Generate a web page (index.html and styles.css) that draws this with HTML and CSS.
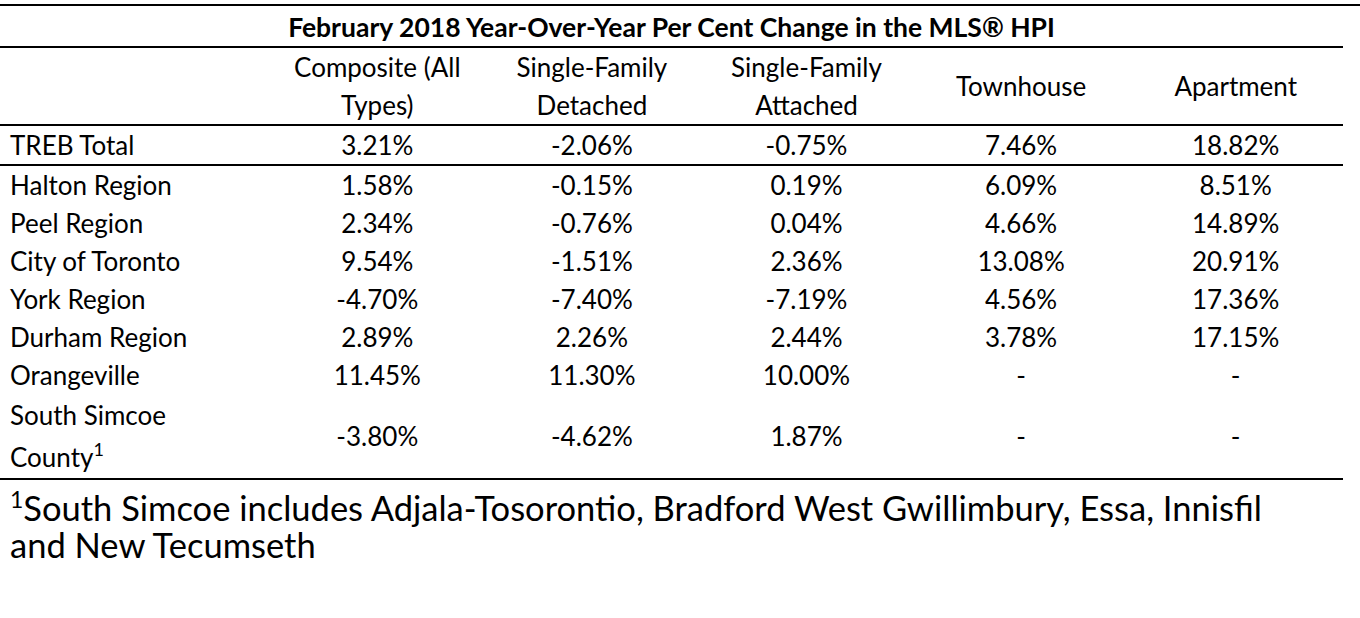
FILE: index.html
```html
<!DOCTYPE html>
<html lang="en">
<head>
<meta charset="utf-8">
<title>February 2018 MLS HPI</title>
<link rel="stylesheet" href="styles.css">
</head>
<body>
<div class="page">
  <div class="rule-top"></div>
  <table class="hpi">
    <colgroup>
      <col class="col-label">
      <col class="col-value">
      <col class="col-value">
      <col class="col-value">
      <col class="col-value">
      <col class="col-value">
    </colgroup>
    <thead>
      <tr class="title-row">
        <th colspan="6">February 2018 Year-Over-Year Per Cent Change in the MLS® HPI</th>
      </tr>
      <tr class="head-row">
        <th class="label"></th>
        <th>Composite (All<br>Types)</th>
        <th>Single-Family<br>Detached</th>
        <th>Single-Family<br>Attached</th>
        <th>Townhouse</th>
        <th>Apartment</th>
      </tr>
    </thead>
    <tbody>
      <tr class="total-row">
        <td class="label">TREB Total</td><td>3.21%</td><td>-2.06%</td><td>-0.75%</td><td>7.46%</td><td>18.82%</td>
      </tr>
      <tr>
        <td class="label">Halton Region</td><td>1.58%</td><td>-0.15%</td><td>0.19%</td><td>6.09%</td><td>8.51%</td>
      </tr>
      <tr>
        <td class="label">Peel Region</td><td>2.34%</td><td>-0.76%</td><td>0.04%</td><td>4.66%</td><td>14.89%</td>
      </tr>
      <tr>
        <td class="label">City of Toronto</td><td>9.54%</td><td>-1.51%</td><td>2.36%</td><td>13.08%</td><td>20.91%</td>
      </tr>
      <tr>
        <td class="label">York Region</td><td>-4.70%</td><td>-7.40%</td><td>-7.19%</td><td>4.56%</td><td>17.36%</td>
      </tr>
      <tr>
        <td class="label">Durham Region</td><td>2.89%</td><td>2.26%</td><td>2.44%</td><td>3.78%</td><td>17.15%</td>
      </tr>
      <tr>
        <td class="label">Orangeville</td><td>11.45%</td><td>11.30%</td><td>10.00%</td><td>-</td><td>-</td>
      </tr>
      <tr class="last-row">
        <td class="label">South Simcoe<br>County<sup>1</sup></td><td>-3.80%</td><td>-4.62%</td><td>1.87%</td><td>-</td><td>-</td>
      </tr>
    </tbody>
  </table>
  <p class="footnote"><sup>1</sup>South Simcoe includes Adjala-Tosorontio, Bradford West Gwillimbury, Essa, Innisfil<br>and New Tecumseth</p>
</div>
</body>
</html>
```

FILE: styles.css
```css
html, body {
  margin: 0;
  padding: 0;
  background: #ffffff;
}

body {
  font-family: "Lato", "Liberation Sans", sans-serif;
  color: #000000;
}

.page {
  width: 1360px;
  padding-top: 4px;
}

.rule-top {
  border-top: 2px solid #000;
}

.hpi {
  width: 1343px;
  border-collapse: separate;
  border-spacing: 0;
  table-layout: fixed;
  font-size: 26px;
  line-height: 38px;
}

.col-label {
  width: 270px;
}

.hpi th,
.hpi td {
  padding: 0;
  text-align: center;
  vertical-align: middle;
  font-weight: normal;
}

.hpi th.label,
.hpi td.label {
  text-align: left;
  padding-left: 10px;
}

.title-row th {
  font-weight: bold;
  font-size: 26.5px;
  height: 38px;
  padding-top: 2px;
  box-sizing: border-box;
  border-bottom: 2px solid #000;
}

.head-row th {
  height: 76px;
  border-bottom: 2px solid #000;
}

.total-row td {
  height: 38px;
  border-bottom: 2px solid #000;
}

.last-row td {
  line-height: 42px;
  border-bottom: 2px solid #000;
}

.hpi sup {
  font-size: 18px;
  line-height: 0;
  vertical-align: 11px;
}

.footnote {
  margin: 0;
  padding: 9px 0 0 10px;
  font-size: 34.5px;
  line-height: 37px;
}

.footnote sup {
  font-size: 23px;
  line-height: 0;
  vertical-align: 13px;
}
```
